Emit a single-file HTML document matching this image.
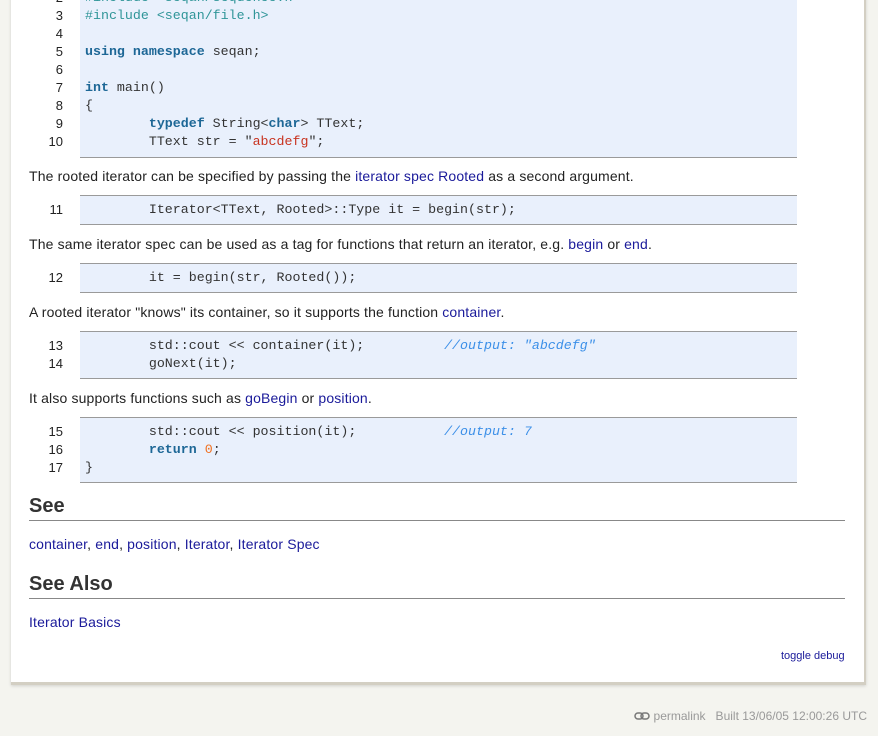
<!DOCTYPE html>
<html><head><meta charset="utf-8"><style>
body{margin:0;width:878px;height:736px;background:#f4f4ef;overflow:hidden;position:relative;font-family:"Liberation Sans",sans-serif;}
.panel{position:absolute;left:11px;top:-10px;width:853px;height:692px;background:#fff;border-right:2px solid #d3cfc3;border-bottom:3px solid #d3cfc3;box-shadow:0 1px 3px rgba(0,0,0,.15);}
.code{position:absolute;left:80px;width:717px;background:#e9f0fc;border-top:1px solid #9a9a9a;border-bottom:1px solid #9a9a9a;}
.ln{position:absolute;font-family:"Liberation Sans",sans-serif;font-size:13px;color:#222;width:40px;text-align:right;left:23px;line-height:18px;}
.cl{position:absolute;left:85px;font-family:"Liberation Mono",monospace;font-size:13.3px;color:#333;line-height:18px;white-space:pre;}
.k{color:#1d6796;font-weight:bold}.i{color:#2f9598}.s{color:#c8321e}.n{color:#f07020}.c{color:#3b8fe8;font-style:italic}
.p{position:absolute;left:29px;font-size:14px;letter-spacing:0.15px;color:#222;line-height:18px;white-space:nowrap}
a{color:#1a1a9a;text-decoration:none}
h2{position:absolute;left:29px;width:816px;margin:0;font-size:20px;font-weight:bold;color:#333;border-bottom:1px solid #888;line-height:24px;padding-bottom:2px}
.foot{position:absolute;right:11px;top:707px;font-size:12px;color:#999;line-height:18px;white-space:nowrap}
</style></head><body>
<div class="panel"></div>
<div class="code" style="top:-10px;height:166px"></div>
<div class="code" style="top:195px;height:28px"></div>
<div class="code" style="top:263px;height:28px"></div>
<div class="code" style="top:331px;height:46px"></div>
<div class="code" style="top:417px;height:64px"></div>

<div class="ln" style="top:-11px">2</div><div class="cl i" style="top:-11px">#include &lt;seqan/sequence.h&gt;</div>
<div class="ln" style="top:7px">3</div><div class="cl i" style="top:7px">#include &lt;seqan/file.h&gt;</div>
<div class="ln" style="top:25px">4</div>
<div class="ln" style="top:43px">5</div><div class="cl" style="top:43px"><span class="k">using</span> <span class="k">namespace</span> seqan;</div>
<div class="ln" style="top:61px">6</div>
<div class="ln" style="top:79px">7</div><div class="cl" style="top:79px"><span class="k">int</span> main()</div>
<div class="ln" style="top:97px">8</div><div class="cl" style="top:97px">{</div>
<div class="ln" style="top:115px">9</div><div class="cl" style="top:115px">        <span class="k">typedef</span> String&lt;<span class="k">char</span>&gt; TText;</div>
<div class="ln" style="top:133px">10</div><div class="cl" style="top:133px">        TText str = "<span class="s">abcdefg</span>";</div>

<div class="p" style="top:167px">The rooted iterator can be specified by passing the <a>iterator spec Rooted</a> as a second argument.</div>
<div class="ln" style="top:201px">11</div><div class="cl" style="top:201px">        Iterator&lt;TText, Rooted&gt;::Type it = begin(str);</div>
<div class="p" style="top:235px">The same iterator spec can be used as a tag for functions that return an iterator, e.g. <a>begin</a> or <a>end</a>.</div>
<div class="ln" style="top:269px">12</div><div class="cl" style="top:269px">        it = begin(str, Rooted());</div>
<div class="p" style="top:303px">A rooted iterator "knows" its container, so it supports the function <a>container</a>.</div>
<div class="ln" style="top:337px">13</div><div class="cl" style="top:337px">        std::cout &lt;&lt; container(it);          <span class="c">//output: "abcdefg"</span></div>
<div class="ln" style="top:355px">14</div><div class="cl" style="top:355px">        goNext(it);</div>
<div class="p" style="top:389px">It also supports functions such as <a>goBegin</a> or <a>position</a>.</div>
<div class="ln" style="top:423px">15</div><div class="cl" style="top:423px">        std::cout &lt;&lt; position(it);           <span class="c">//output: 7</span></div>
<div class="ln" style="top:441px">16</div><div class="cl" style="top:441px">        <span class="k">return</span> <span class="n">0</span>;</div>
<div class="ln" style="top:459px">17</div><div class="cl" style="top:459px">}</div>

<h2 style="top:494px">See</h2>
<div class="p" style="top:535px"><a>container</a>, <a>end</a>, <a>position</a>, <a>Iterator</a>, <a>Iterator Spec</a></div>
<h2 style="top:572px">See Also</h2>
<div class="p" style="top:613px"><a>Iterator Basics</a></div>
<div class="p" style="top:647px;left:781px;font-size:11px;letter-spacing:0"><a>toggle debug</a></div>
<div class="foot"><svg width="16" height="8" viewBox="0 0 16 8" style="vertical-align:0"><rect x="1" y="1" width="8" height="6" rx="3" fill="none" stroke="#777" stroke-width="1.5"/><rect x="7" y="1" width="8" height="6" rx="3" fill="none" stroke="#777" stroke-width="1.5"/></svg> permalink &nbsp;&nbsp;Built 13/06/05 12:00:26 UTC</div>
</body></html>
